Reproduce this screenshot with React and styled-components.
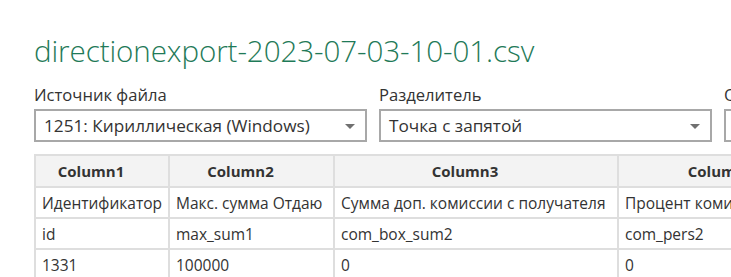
import React from 'react';
import styled, { createGlobalStyle } from 'styled-components';

const GlobalStyle = createGlobalStyle`
  body {
    margin: 0;
    background: #ffffff;
    font-family: "Segoe UI", "Open Sans", "Noto Sans", sans-serif;
  }
`;

const Page = styled.div`
  width: 731px;
  height: 277px;
  overflow: hidden;
  padding: 32px 0 0 34px;
  box-sizing: border-box;
`;

const Title = styled.h1`
  margin: 0;
  font-size: 29.6px;
  font-weight: 300;
  line-height: 38px;
  color: #1f7a58;
  letter-spacing: -0.1px;
  white-space: nowrap;
`;

const FieldsRow = styled.div`
  display: flex;
  gap: 12px;
  margin-top: 14px;
`;

const Field = styled.div`
  width: 333px;
  flex-shrink: 0;
  display: flex;
  flex-direction: column;
`;

const Label = styled.div`
  font-size: 16.6px;
  line-height: 22px;
  color: #333333;
  margin-bottom: 3px;
  white-space: nowrap;
`;

const Select = styled.div`
  height: 33px;
  box-sizing: border-box;
  border: 2px solid #a8a8a8;
  display: flex;
  align-items: center;
  justify-content: space-between;
  padding: 0 10px 0 8px;
  font-size: 17.2px;
  color: #333333;
  white-space: nowrap;
`;

const Arrow = styled.span`
  width: 0;
  height: 0;
  border-left: 5px solid transparent;
  border-right: 5px solid transparent;
  border-top: 5px solid #707070;
  margin-top: 1px;
`;

const Table = styled.table`
  margin-top: 12px;
  border-collapse: collapse;
  table-layout: fixed;
  width: ${(p) => p.$width}px;
  font-size: 15.5px;
  color: #333333;
`;

const HeadCell = styled.th`
  background: #f3f3f3;
  border: 2px solid #dedede;
  height: 30px;
  padding: 0 22px 0 0;
  font-size: 15px;
  font-weight: 700;
  text-align: center;
  white-space: nowrap;
  overflow: hidden;
`;

const Cell = styled.td`
  border: 2px solid #dedede;
  height: 29px;
  padding: 0 6px;
  white-space: nowrap;
  overflow: hidden;
`;

const columns = [
  { name: 'Column1', width: 134 },
  { name: 'Column2', width: 165 },
  { name: 'Column3', width: 284 },
  { name: 'Column4', width: 228 },
];

const rows = [
  ['Идентификатор', 'Макс. сумма Отдаю', 'Сумма доп. комиссии с получателя', 'Процент комиссии'],
  ['id', 'max_sum1', 'com_box_sum2', 'com_pers2'],
  ['1331', '100000', '0', '0'],
];

const tableWidth = columns.reduce((s, c) => s + c.width, 0);

export default function App() {
  return (
    <Page>
      <GlobalStyle />
      <Title>directionexport-2023-07-03-10-01.csv</Title>
      <FieldsRow>
        <Field>
          <Label>Источник файла</Label>
          <Select>
            <span>1251: Кириллическая (Windows)</span>
            <Arrow />
          </Select>
        </Field>
        <Field>
          <Label>Разделитель</Label>
          <Select>
            <span>Точка с запятой</span>
            <Arrow />
          </Select>
        </Field>
        <Field>
          <Label>Определение типа данных</Label>
          <Select>
            <span>На основе первых 200 строк</span>
            <Arrow />
          </Select>
        </Field>
      </FieldsRow>
      <Table $width={tableWidth}>
        <colgroup>
          {columns.map((c) => (
            <col key={c.name} style={{ width: c.width }} />
          ))}
        </colgroup>
        <thead>
          <tr>
            {columns.map((c) => (
              <HeadCell key={c.name}>{c.name}</HeadCell>
            ))}
          </tr>
        </thead>
        <tbody>
          {rows.map((r, i) => (
            <tr key={i}>
              {r.map((v, j) => (
                <Cell key={j}>{v}</Cell>
              ))}
            </tr>
          ))}
        </tbody>
      </Table>
    </Page>
  );
}
